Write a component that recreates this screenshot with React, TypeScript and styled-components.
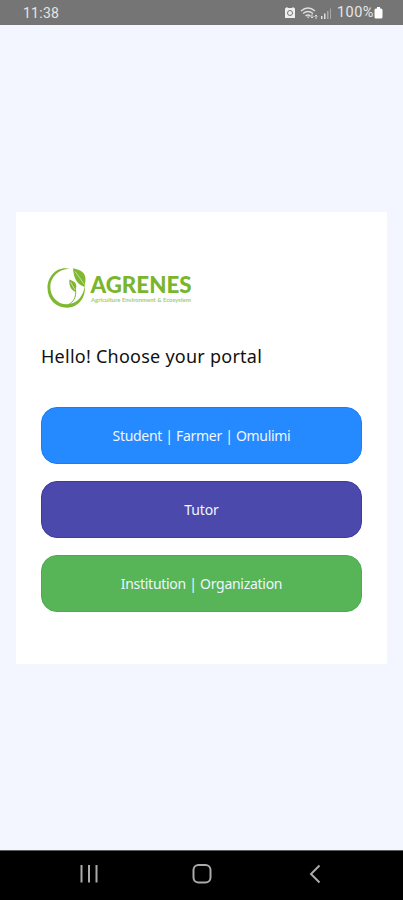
import React from "react";
import styled, { createGlobalStyle } from "styled-components";

const GlobalStyle = createGlobalStyle`
  * { box-sizing: border-box; }
  body { margin: 0; background: #f3f6ff; font-family: "Noto Sans", sans-serif; }
`;

const Screen = styled.div`
  width: 100%;
  height: 900px;
  display: flex;
  flex-direction: column;
  overflow: hidden;
`;

const StatusBar = styled.header`
  height: 25px;
  flex: none;
  display: flex;
  align-items: center;
  justify-content: space-between;
  padding: 1px 20px 0 23px;
  background: #757575;
  color: #e6e6e6;
  font: 14px/24px Roboto, sans-serif;
`;

const Clock = styled.span`
  letter-spacing: 0.25px;
`;

const StatusIcons = styled.div`
  display: flex;
  align-items: center;
`;

const Battery = styled.span`
  margin-left: 4px;
  font-size: 14.5px;
  letter-spacing: 0.5px;
`;

const Main = styled.main`
  flex: 1;
  padding: 187px 16px 0;
`;

const Card = styled.section`
  height: 452px;
  padding: 52px 25px 0;
  background: #fff;
`;

const Logo = styled.svg`
  display: block;
  width: 155px;
  height: 48px;
  margin-left: 2px;
`;

const Heading = styled.h1`
  margin: 30px 0 0;
  font-size: 18px;
  line-height: 28px;
  font-weight: 400;
  letter-spacing: 0.25px;
  color: #111;
  white-space: nowrap;
`;

const Portals = styled.div`
  display: grid;
  grid-auto-rows: 57px;
  row-gap: 17px;
  margin-top: 37px;
`;

const PortalButton = styled.button<{ $color: string; $edge: string; $spacing: number }>`
  border: 1px solid ${(p) => p.$edge};
  border-radius: 16px;
  background: ${(p) => p.$color};
  color: #eef6ff;
  font: 400 14px/20px "Noto Sans", sans-serif;
  letter-spacing: ${(p) => p.$spacing}px;
  padding: 1px 0 0;
`;

const NavBar = styled.nav`
  height: 50px;
  flex: none;
  display: grid;
  grid-template-columns: repeat(3, 113px);
  justify-content: center;
  justify-items: center;
  align-items: center;
  padding-bottom: 3px;
  border-top: 1px solid #5c5e5d;
  background: #000;
`;

const NavIcon = styled.svg`
  display: block;
  width: 24px;
  height: 24px;
  fill: none;
  stroke: #aaa;
  stroke-width: 2;
`;

const portals = [
  { label: "Student | Farmer | Omulimi", color: "#2589ff", edge: "#1b7df4", spacing: -0.31 },
  { label: "Tutor", color: "#4c49ad", edge: "#42389f", spacing: -0.15 },
  { label: "Institution | Organization", color: "#57b558", edge: "#4cac4d", spacing: -0.28 },
];

function AgrenesLogo() {
  return (
    <Logo viewBox="43 264 155 48" role="img" aria-label="Agrenes">
      <g fill="#80b832">
        <path d="M70 268.800C57 265.500 47.500 276 47.500 288C47.500 299.500 56 307.700 67 307.700C78 307.700 86 298 84.800 286C83 296.500 77.500 301.500 73 303C61 307.500 50.500 299 50.300 287C50.200 277 59 268.500 70 268.800Z" />
        <path d="M73 268.300C81 270 86 273 85.500 280C85.400 283 84.300 284 84.800 287C76.500 284.500 73.800 278 73 268.300Z" />
        <path d="M69.300 279.500C74.500 281 77.500 284 76 288L75.900 292C70.500 290 69 285.500 69.300 279.500Z" />
      </g>
      <path d="M75.500 290C76.500 297 73.500 302 68.500 304.500" fill="none" stroke="#80b832" strokeWidth="1" />
      <path d="M75 271.500Q80 278 84 284M70.500 282L75 290" fill="none" stroke="#edf6df" strokeWidth=".6" />
      <text x="90.500" y="293" textLength="101" lengthAdjust="spacingAndGlyphs" fill="#7ab52c" fontFamily="Lato, sans-serif" fontWeight="900" fontSize="22">AGRENES</text>
      <text x="91" y="301.700" textLength="100" lengthAdjust="spacingAndGlyphs" fill="#a4cc71" fontFamily="Lato, sans-serif" fontWeight="700" fontSize="5.300">Agriculture Environment &amp; Ecosystem</text>
    </Logo>
  );
}

export default function App() {
  return (
    <>
      <GlobalStyle />
      <Screen>
        <StatusBar>
          <Clock>11:38</Clock>
          <StatusIcons>
            <svg width="49" height="16" viewBox="0 0 49 16">
              <path d="M1 3.500L3 2L4 3H8L9 2L11 3.500V13H1Z" fill="#eee" />
              <circle cx="6" cy="8" r="2.500" fill="none" stroke="#777" />
              <g fill="none" stroke="#ddd" strokeWidth="1.500">
                <path d="M17 6Q24 0 31 6M19 8.500Q24 4.500 29 8.500M21.500 11Q24 9 26.500 11" />
                <path d="M28 9V13M26.500 11.500L28 13L29.500 11.500M32 14V10M30.500 11.500L32 10L33.500 11.500" strokeWidth="1" />
              </g>
              <path d="M23 11.500H25.500L24.200 13.500Z" fill="#ddd" />
              <path d="M37 11H38.500V14H37ZM40 8.500H41.500V14H40Z" fill="#ddd" />
              <path d="M43 6H44.500V14H43ZM46 3.500H47V14H46Z" fill="#a7a7a7" />
            </svg>
            <Battery>100%</Battery>
            <svg width="9" height="14" viewBox="0 0 9 14">
              <path d="M3 1H6V2.500H7Q8.500 2.500 8.500 4V11Q8.500 12.500 7 12.500H2Q.5 12.500 .5 11V4Q.5 2.500 2 2.500H3Z" fill="#fff" />
            </svg>
          </StatusIcons>
        </StatusBar>
        <Main>
          <Card>
            <AgrenesLogo />
            <Heading>Hello! Choose your portal</Heading>
            <Portals>
              {portals.map((p) => (
                <PortalButton key={p.label} $color={p.color} $edge={p.edge} $spacing={p.spacing}>
                  {p.label}
                </PortalButton>
              ))}
            </Portals>
          </Card>
        </Main>
        <NavBar>
          <NavIcon viewBox="0 0 24 24"><path d="M4.500 3V20.500M12 3V20.500M19.500 3V20.500" /></NavIcon>
          <NavIcon viewBox="0 0 24 24"><rect x="3.500" y="3" width="17" height="17.500" rx="5" /></NavIcon>
          <NavIcon viewBox="0 0 24 24"><path d="M16.500 3.500L8 12L16.500 20.500" /></NavIcon>
        </NavBar>
      </Screen>
    </>
  );
}
